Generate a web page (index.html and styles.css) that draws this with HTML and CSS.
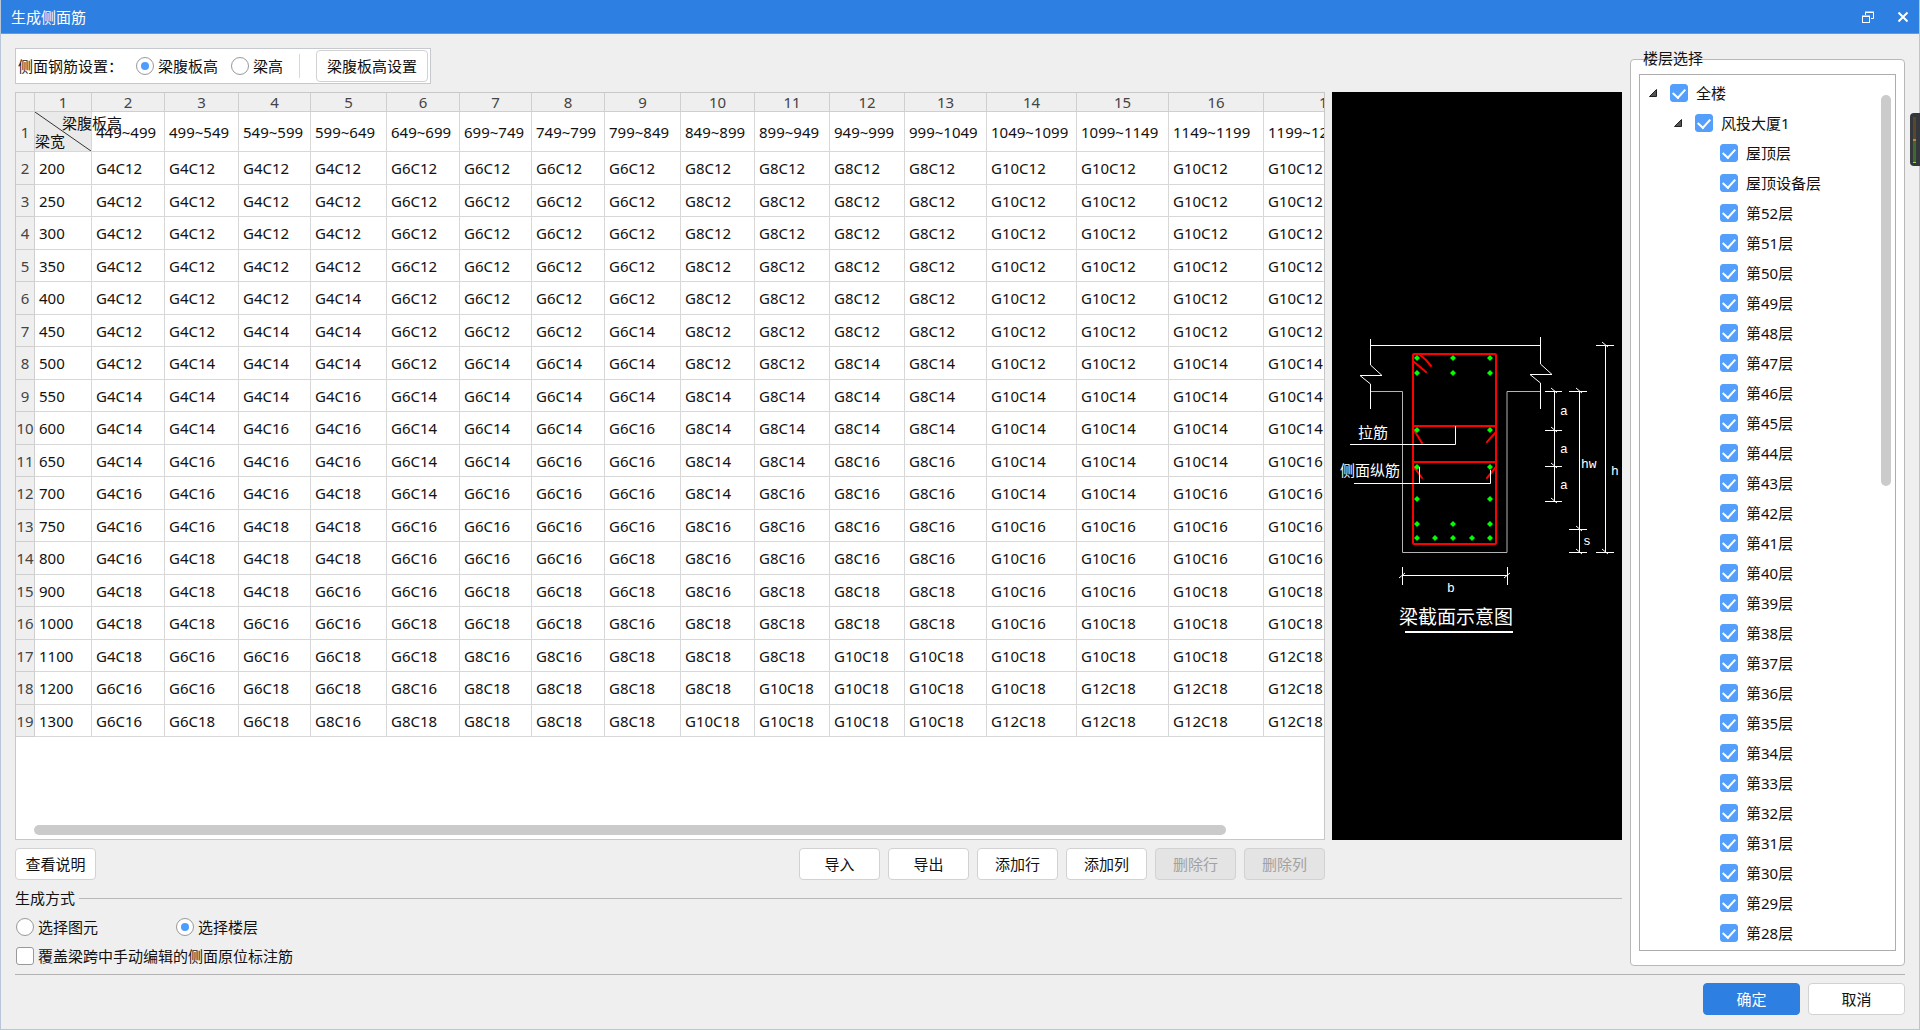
FILE: index.html
```html
<!DOCTYPE html>
<html lang="zh-CN">
<head>
    <meta charset="UTF-8">
    <meta name="viewport" content="width=device-width, initial-scale=1.0">
    <title>生成侧面筋</title>
    <link rel="stylesheet" href="styles.css">
</head>
<body>
    <header class="title-bar">
        <h1>生成侧面筋</h1>
        <button type="button" class="window-btn" aria-label="还原">
            <svg width="12" height="12" viewBox="0 0 12 12">
                <path d="M3.500 4V1.500H11.500V7.500H9" /><path d="M3 1h9" />
                <rect x="0.500" y="5.500" width="7" height="6" /><path d="M0 5H8" />
            </svg>
        </button>
        <button type="button" class="window-btn" aria-label="关闭">
            <svg width="12" height="12" viewBox="0 0 12 12"><path class="close-cross" d="M1.500 1.500l9 9M10.500 1.500l-9 9" /></svg>
        </button>
    </header>

    <main class="content">
        <section class="left-panel">
            <div class="setting-bar">
                <span class="setting-title">侧面钢筋设置：</span>
                <label class="option"><input type="radio" name="height-type" checked>梁腹板高</label>
                <label class="option"><input type="radio" name="height-type">梁高</label>
                <span class="divider"></span>
                <button type="button" class="btn btn-fit">梁腹板高设置</button>
            </div>

            <div class="work-area">
                <div class="table-box">
                    <div class="table-view">
                        <table class="rebar-table" id="rebar-table">
                            <colgroup id="rebar-cols"></colgroup>
                            <thead></thead>
                            <tbody></tbody>
                        </table>
                    </div>
                    <div class="h-scroll"><div class="h-thumb"></div></div>
                </div>

                <div class="diagram">
                    <svg viewBox="0 0 290 748" width="290" height="748" role="img" aria-label="梁截面示意图">
                        <!-- 板和梁的轮廓 -->
                        <g class="line">
                            <path d="M39 253.500H208" />
                            <path d="M38.500 247V273L50 283.500H28L38.500 292V317" />
                            <path d="M208.500 245V272L220 282.500H198L208.500 291V317" />
                        </g>
                        <path class="outline" d="M39 299.500H70.500V460.500H175V299.500H208" />

                        <!-- 箍筋、拉筋 -->
                        <g class="steel">
                            <rect x="81" y="262" width="83" height="190" rx="1" />
                            <path d="M81 334H164M81 370H164" />
                            <path d="M88 263L94 268L99 274M81 269L94 280" />
                            <path d="M82 338L90 351M164 340L155 350" />
                            <path d="M82 375L90 386M164 375L155 386" />
                        </g>

                        <!-- 纵筋 -->
                        <g class="bars" id="bars"></g>

                        <!-- 引线 -->
                        <g class="line">
                            <path d="M18 352.500H123.500V334" />
                            <path d="M22 391.500H158.500V378M87.500 391V375" />
                        </g>

                        <!-- 尺寸线 -->
                        <g class="line">
                            <path d="M222.500 299V410M213 299.500H230M213 338.500H230M213 374.500H230M213 409.500H230" />
                            <path d="M219 296l6 5M219 335l6 5M219 371l6 5M219 406l6 5" />
                            <path d="M247.500 299V461M237 299.500H255M237 437.500H255M237 460.500H255" />
                            <path d="M244 296l6 5M244 434l6 5M244 457l6 5" />
                            <path d="M273.500 253V461M264 253.500H282M264 460.500H282" />
                            <path d="M270 250l6 5M270 457l6 5" />
                            <path d="M70.500 475V493M175.500 475V493M70 483.500H175" />
                            <path d="M67 486l6 -5M172 486l6 -5" />
                        </g>
                        <path class="title-line" d="M73 540H181" />

                        <text x="26" y="346">拉筋</text>
                        <text x="8" y="384">侧面纵筋</text>
                        <text class="dim" x="228" y="323">a</text>
                        <text class="dim" x="228" y="361">a</text>
                        <text class="dim" x="228" y="397">a</text>
                        <text class="dim" x="249" y="376">hw</text>
                        <text class="dim" x="279" y="383">h</text>
                        <text class="dim" x="251" y="453">s</text>
                        <text class="dim" x="115" y="500">b</text>
                        <text class="caption" x="67" y="532">梁截面示意图</text>
                    </svg>
                </div>

                <div class="table-actions">
                    <button type="button" class="btn help-btn">查看说明</button>
                    <button type="button" class="btn">导入</button>
                    <button type="button" class="btn">导出</button>
                    <button type="button" class="btn">添加行</button>
                    <button type="button" class="btn">添加列</button>
                    <button type="button" class="btn" disabled>删除行</button>
                    <button type="button" class="btn" disabled>删除列</button>
                </div>
            </div>

            <div class="mode">
                <h2>生成方式</h2>
                <div class="mode-row">
                    <label class="option"><input type="radio" name="mode">选择图元</label>
                    <label class="option"><input type="radio" name="mode" checked>选择楼层</label>
                </div>
                <label class="option"><input type="checkbox">覆盖梁跨中手动编辑的侧面原位标注筋</label>
            </div>
        </section>

        <section class="floor-panel">
            <h2>楼层选择</h2>
            <div class="tree-box">
                <ul class="tree" id="floor-tree"></ul>
                <div class="v-thumb"></div>
            </div>
        </section>
    </main>

    <footer class="footer">
        <button type="button" class="btn btn-wide btn-primary">确定</button>
        <button type="button" class="btn btn-wide">取消</button>
    </footer>

    <div class="edge-meter"><span class="meter-high"></span><span class="meter-low"></span></div>

    <script src="script.js"></script>
</body>
</html>
```
FILE: styles.css
```css
* {
    margin: 0;
    padding: 0;
    box-sizing: border-box;
}
body {
    font-family: "Noto Sans", "Noto Sans CJK SC", sans-serif;
    font-size: 15px;
    line-height: 20px;
    color: #111;
    background-color: #efefef;
    height: 100vh;
    display: flex;
    flex-direction: column;
    border: 1px solid #b9c6da;
    border-top: none;
    overflow: hidden;
}
h1, h2 {
    font-size: 15px;
    font-weight: 400;
}
button, input {
    font: inherit;
    color: inherit;
}

/* title bar */
.title-bar {
    height: 34px;
    margin: 0 -1px;
    padding: 0 11px;
    display: flex;
    align-items: center;
    background-color: #2d7fe1;
    border-bottom: 1px solid #5c9be8;
    color: #fff;
    flex-shrink: 0;
}
.title-bar h1 {
    flex: 1;
}
.window-btn {
    background: none;
    border: none;
    display: flex;
    margin-left: 23px;
}
.window-btn svg {
    fill: none;
    stroke: #fff;
    stroke-width: 1;
}
.window-btn .close-cross {
    stroke-width: 2;
}

/* controls */
.btn {
    width: 81px;
    height: 32px;
    background-color: #fff;
    border: 1px solid #d2d2d2;
    border-radius: 4px;
}
.btn:disabled {
    background-color: #e4e4e4;
    color: #a2a2a2;
}
.btn-fit {
    width: auto;
    padding: 0 10px;
}
.btn-wide {
    width: 97px;
}
.btn-primary {
    background-color: #2d7fe1;
    border-color: #2d7fe1;
    color: #fff;
}
.option {
    display: flex;
    align-items: center;
    gap: 4px;
}
input[type="radio"], input[type="checkbox"] {
    appearance: none;
    width: 18px;
    height: 18px;
    background-color: #fff;
    border: 1px solid #999;
    border-radius: 3px;
    display: flex;
    align-items: center;
    justify-content: center;
    flex-shrink: 0;
}
input[type="radio"] {
    border-radius: 50%;
}
input[type="radio"]:checked::after {
    content: "";
    width: 8px;
    height: 8px;
    border-radius: 50%;
    background-color: #4c9dff;
}
input[type="checkbox"]:checked {
    background-color: #549ffc;
    border-color: #549ffc;
}
input[type="checkbox"]:checked::after {
    content: "";
    width: 6px;
    height: 10px;
    margin-bottom: 3px;
    border: solid #fff;
    border-width: 0 2px 2px 0;
    transform: rotate(42deg);
}

/* main layout */
.content {
    flex: 1;
    min-height: 0;
    display: flex;
    gap: 8px;
    margin: 0 14px;
    padding-bottom: 8px;
    border-bottom: 1px solid #b2b2b2;
}
.left-panel {
    flex: 1;
    min-width: 0;
    display: flex;
    flex-direction: column;
    padding-top: 14px;
}
.setting-bar {
    align-self: flex-start;
    height: 36px;
    padding: 0 2px;
    display: flex;
    align-items: center;
    background-color: #fff;
    border: 1px solid #c6cacf;
}
.setting-bar .option {
    margin-left: 13px;
}
.divider {
    width: 1px;
    height: 24px;
    margin: 0 16px;
    background-color: #d8d8d8;
}
.work-area {
    flex: 1;
    min-height: 0;
    margin-top: 8px;
    display: grid;
    grid-template-columns: minmax(0, 1fr) 290px;
    grid-template-rows: minmax(0, 1fr) auto;
    gap: 8px 7px;
}

/* table */
.table-box {
    display: flex;
    flex-direction: column;
    background-color: #fff;
    border: 1px solid #c8c8c8;
}
.table-view {
    flex: 1;
    overflow: hidden;
}
.h-scroll {
    height: 14px;
    padding-left: 18px;
}
.h-thumb {
    width: 92.4%;
    height: 10px;
    border-radius: 5px;
    background-color: #cbcbcb;
}
.rebar-table {
    table-layout: fixed;
    width: 1376px;
    border-collapse: separate;
    border-spacing: 0;
}
.rebar-table th, .rebar-table td {
    height: 33px;
    border-right: 1px solid #d8d8d8;
    border-bottom: 1px solid #d8d8d8;
    font-weight: 400;
    white-space: nowrap;
    overflow: hidden;
}
.rebar-table td {
    padding-left: 4px;
}
.rebar-table tbody tr:nth-child(odd) > * {
    height: 32px;
}
.rebar-table tbody .range-row > * {
    height: 40px;
}
.rebar-table th {
    background-color: #efefef;
    border-color: #cfcfcf;
    color: #444;
    text-align: center;
}
.rebar-table thead th {
    height: 19px;
    line-height: 16px;
}
.rebar-table .corner {
    position: relative;
    padding: 0;
    overflow: visible;
    background-color: #eaeaea;
}
.corner svg {
    display: block;
    width: 100%;
    height: 39px;
    stroke: #333;
}
.corner span {
    position: absolute;
}
.corner .corner-top {
    top: 1px;
    left: 27px;
}
.corner .corner-bottom {
    bottom: 0;
    left: 0;
}

/* section drawing */
.diagram {
    background-color: #000;
    overflow: hidden;
}
.diagram svg {
    display: block;
}
.diagram text {
    fill: #fff;
    font-size: 15px;
}
.diagram .dim {
    font-family: "Liberation Mono", monospace;
    font-size: 13px;
}
.diagram .caption {
    font-size: 19px;
}
.line {
    fill: none;
    stroke: #fff;
}
.outline {
    fill: none;
    stroke: #b4b4b4;
}
.title-line {
    stroke: #fff;
    stroke-width: 2;
}
.steel {
    fill: none;
    stroke: #f00;
    stroke-width: 2;
    stroke-linecap: round;
}
.bars {
    fill: #0f0;
}

.table-actions {
    display: flex;
    gap: 8px;
}
.help-btn {
    margin-right: auto;
}

/* generate mode */
.mode {
    margin-top: 8px;
    display: flex;
    flex-direction: column;
    gap: 9px;
}
.mode h2 {
    display: flex;
    align-items: center;
    gap: 4px;
}
.mode h2::after {
    content: "";
    flex: 1;
    height: 1px;
    background-color: #b8b8b8;
}
.mode-row {
    display: grid;
    grid-template-columns: 160px 160px;
}
.mode .option {
    padding-left: 1px;
}

/* floor tree */
.floor-panel {
    width: 275px;
    margin-top: 25px;
    padding: 0 8px 14px;
    display: flex;
    flex-direction: column;
    background-color: #fff;
    border: 1px solid #b8b8b8;
    border-radius: 4px;
}
.floor-panel h2 {
    margin: -12px 0 6px 4px;
}
.tree-box {
    position: relative;
    flex: 1;
    min-height: 0;
    padding-top: 3px;
    border: 1px solid #adadad;
    overflow: hidden;
}
.tree {
    list-style: none;
}
.tree label {
    height: 30px;
    display: flex;
    align-items: center;
    gap: 8px;
}
.tree .level-0 {
    padding-left: 9px;
}
.tree .level-1 {
    padding-left: 34px;
}
.tree .level-2 {
    padding-left: 80px;
}
.tree .arrow {
    width: 8px;
    height: 8px;
    margin-right: 5px;
    fill: #555;
    stroke: #222;
}
.v-thumb {
    position: absolute;
    top: 20px;
    right: 4px;
    width: 10px;
    height: 391px;
    border-radius: 5px;
    background-color: #cbcbcb;
}

.footer {
    display: flex;
    justify-content: flex-end;
    gap: 8px;
    padding: 8px 14px 14px;
}

/* level meter docked on the window edge */
.edge-meter {
    position: absolute;
    top: 113px;
    right: 0;
    width: 10px;
    height: 53px;
    padding: 4px 4px 3px 3px;
    display: flex;
    flex-direction: column;
    background-color: #34383c;
    border-radius: 4px 0 0 4px;
}
.edge-meter span {
    flex: 1;
    width: 3px;
}
.meter-high {
    background-color: #59462f;
    border-bottom: 2px solid #c88428;
}
.meter-low {
    background-color: #41682f;
    border-bottom: 1px solid #8ce04a;
}
```
FILE: script.js
```javascript
const colWidths = [19, 57, 73, 74, 72, 76, 73, 72, 73, 76, 74, 75, 75, 82, 90, 92, 95, 128];

const ranges = ['449~499', '499~549', '549~599', '599~649', '649~699', '699~749', '749~799', '799~849',
    '849~899', '899~949', '949~999', '999~1049', '1049~1099', '1099~1149', '1149~1199', '1199~1249'];

const rebar = {
    200: 'G4C12 G4C12 G4C12 G4C12 G6C12 G6C12 G6C12 G6C12 G8C12 G8C12 G8C12 G8C12 G10C12 G10C12 G10C12 G10C12',
    250: 'G4C12 G4C12 G4C12 G4C12 G6C12 G6C12 G6C12 G6C12 G8C12 G8C12 G8C12 G8C12 G10C12 G10C12 G10C12 G10C12',
    300: 'G4C12 G4C12 G4C12 G4C12 G6C12 G6C12 G6C12 G6C12 G8C12 G8C12 G8C12 G8C12 G10C12 G10C12 G10C12 G10C12',
    350: 'G4C12 G4C12 G4C12 G4C12 G6C12 G6C12 G6C12 G6C12 G8C12 G8C12 G8C12 G8C12 G10C12 G10C12 G10C12 G10C12',
    400: 'G4C12 G4C12 G4C12 G4C14 G6C12 G6C12 G6C12 G6C12 G8C12 G8C12 G8C12 G8C12 G10C12 G10C12 G10C12 G10C12',
    450: 'G4C12 G4C12 G4C14 G4C14 G6C12 G6C12 G6C12 G6C14 G8C12 G8C12 G8C12 G8C12 G10C12 G10C12 G10C12 G10C12',
    500: 'G4C12 G4C14 G4C14 G4C14 G6C12 G6C14 G6C14 G6C14 G8C12 G8C12 G8C14 G8C14 G10C12 G10C12 G10C14 G10C14',
    550: 'G4C14 G4C14 G4C14 G4C16 G6C14 G6C14 G6C14 G6C14 G8C14 G8C14 G8C14 G8C14 G10C14 G10C14 G10C14 G10C14',
    600: 'G4C14 G4C14 G4C16 G4C16 G6C14 G6C14 G6C14 G6C16 G8C14 G8C14 G8C14 G8C14 G10C14 G10C14 G10C14 G10C14',
    650: 'G4C14 G4C16 G4C16 G4C16 G6C14 G6C14 G6C16 G6C16 G8C14 G8C14 G8C16 G8C16 G10C14 G10C14 G10C14 G10C16',
    700: 'G4C16 G4C16 G4C16 G4C18 G6C14 G6C16 G6C16 G6C16 G8C14 G8C16 G8C16 G8C16 G10C14 G10C14 G10C16 G10C16',
    750: 'G4C16 G4C16 G4C18 G4C18 G6C16 G6C16 G6C16 G6C16 G8C16 G8C16 G8C16 G8C16 G10C16 G10C16 G10C16 G10C16',
    800: 'G4C16 G4C18 G4C18 G4C18 G6C16 G6C16 G6C16 G6C18 G8C16 G8C16 G8C16 G8C16 G10C16 G10C16 G10C16 G10C16',
    900: 'G4C18 G4C18 G4C18 G6C16 G6C16 G6C18 G6C18 G6C18 G8C16 G8C18 G8C18 G8C18 G10C16 G10C16 G10C18 G10C18',
    1000: 'G4C18 G4C18 G6C16 G6C16 G6C18 G6C18 G6C18 G8C16 G8C18 G8C18 G8C18 G8C18 G10C16 G10C18 G10C18 G10C18',
    1100: 'G4C18 G6C16 G6C16 G6C18 G6C18 G8C16 G8C16 G8C18 G8C18 G8C18 G10C18 G10C18 G10C18 G10C18 G10C18 G12C18',
    1200: 'G6C16 G6C16 G6C18 G6C18 G8C16 G8C18 G8C18 G8C18 G8C18 G10C18 G10C18 G10C18 G10C18 G12C18 G12C18 G12C18',
    1300: 'G6C16 G6C18 G6C18 G8C16 G8C18 G8C18 G8C18 G8C18 G10C18 G10C18 G10C18 G10C18 G12C18 G12C18 G12C18 G12C18'
};

function buildTable() {
    const table = document.getElementById('rebar-table');
    document.getElementById('rebar-cols').innerHTML =
        colWidths.map(w => `<col style="width: ${w}px">`).join('');

    const heads = colWidths.map((w, i) => `<th scope="col">${i || ''}</th>`).join('');
    table.tHead.innerHTML = `<tr>${heads}</tr>`;

    let html = `<tr class="range-row"><th scope="row">1</th>
        <td class="corner">
            <svg viewBox="0 0 56 39" preserveAspectRatio="none"><path d="M0 0L56 39" /></svg>
            <span class="corner-top">梁腹板高</span><span class="corner-bottom">梁宽</span>
        </td>${ranges.map(r => `<td>${r}</td>`).join('')}</tr>`;
    Object.entries(rebar).forEach(([width, cells], i) => {
        html += `<tr><th scope="row">${i + 2}</th><td>${width}</td>` +
            cells.split(' ').map(c => `<td>${c}</td>`).join('') + '</tr>';
    });
    table.tBodies[0].innerHTML = html;
}

function buildTree() {
    const nodes = [['全楼', 0], ['风投大厦1', 1], ['屋顶层', 2], ['屋顶设备层', 2]];
    for (let n = 52; n >= 28; n--) {
        nodes.push([`第${n}层`, 2]);
    }
    const arrow = '<svg class="arrow" viewBox="0 0 8 8"><path d="M7.5 .5V7.5H.5Z" /></svg>';
    document.getElementById('floor-tree').innerHTML = nodes.map(([name, level]) =>
        `<li><label class="level-${level}">${level < 2 ? arrow : ''}<input type="checkbox" checked>${name}</label></li>`
    ).join('');
}

function drawBars() {
    const bars = [[85, 266], [121, 266], [158, 266], [85, 281], [121, 281], [158, 281],
        [85, 338], [158, 338], [85, 375], [158, 375], [85, 407], [158, 407],
        [85, 432], [121, 432], [158, 432],
        [85, 446], [103, 446], [121, 446], [140, 446], [158, 446]];
    document.getElementById('bars').innerHTML =
        bars.map(([x, y]) => `<path d="M${x - 3} ${y}l3 -3l3 3l-3 3z" />`).join('');
}

buildTable();
buildTree();
drawBars();
```
